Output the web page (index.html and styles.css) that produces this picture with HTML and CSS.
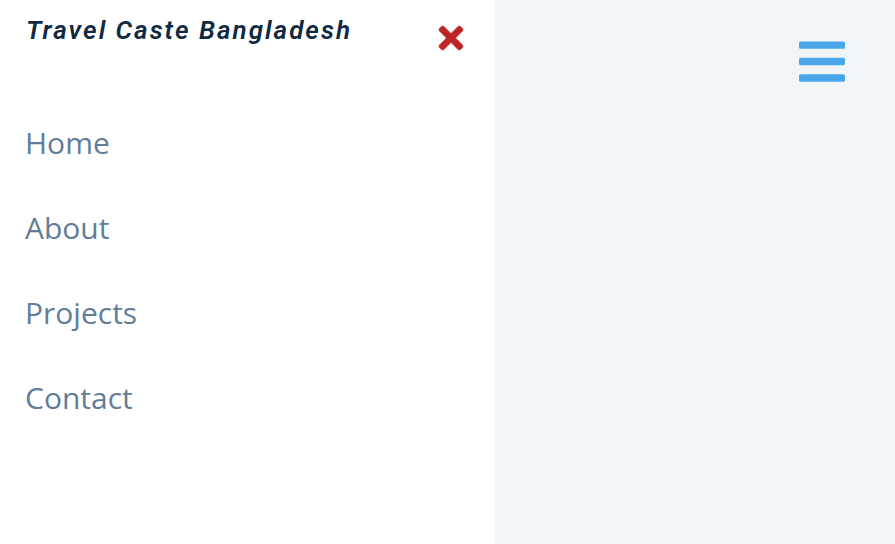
FILE: index.html
```html
<!DOCTYPE html>
<html lang="en">
<head>
<meta charset="utf-8">
<title>Travel Caste Bangladesh</title>
<link rel="stylesheet" href="styles.css">
</head>
<body>
<aside class="sidebar">
  <header class="sidebar-header">
    <h1 class="brand">Travel Caste Bangladesh</h1>
    <button class="icon-btn close-btn" type="button" aria-label="Close menu">
      <svg class="close-icon" viewBox="0 0 352 512" aria-hidden="true"><path fill="currentColor" stroke="currentColor" stroke-width="8" d="M242.72 256l100.07-100.07c12.28-12.28 12.28-32.19 0-44.48l-22.24-22.24c-12.28-12.28-32.19-12.28-44.48 0L176 189.28 75.93 89.21c-12.28-12.28-32.19-12.28-44.48 0L9.21 111.45c-12.28 12.28-12.28 32.19 0 44.48L109.28 256 9.21 356.07c-12.28 12.28-12.28 32.19 0 44.48l22.24 22.24c12.28 12.28 32.2 12.28 44.48 0L176 322.72l100.07 100.07c12.28 12.28 32.2 12.28 44.48 0l22.24-22.24c12.28-12.28 12.28-32.19 0-44.48L242.72 256z"/></svg>
    </button>
  </header>
  <nav>
    <ul class="links">
      <li><a href="#home">Home</a></li>
      <li><a href="#about">About</a></li>
      <li><a href="#projects">Projects</a></li>
      <li><a href="#contact">Contact</a></li>
    </ul>
  </nav>
</aside>
<main class="page">
  <button class="icon-btn menu-btn" type="button" aria-label="Open menu">
    <svg class="menu-icon" viewBox="0 0 448 512" aria-hidden="true"><path fill="currentColor" d="M16 132h416c8.837 0 16-7.163 16-16V76c0-8.837-7.163-16-16-16H16C7.163 60 0 67.163 0 76v40c0 8.837 7.163 16 16 16zm0 160h416c8.837 0 16-7.163 16-16v-40c0-8.837-7.163-16-16-16H16c-8.837 0-16 7.163-16 16v40c0 8.837 7.163 16 16 16zm0 160h416c8.837 0 16-7.163 16-16v-40c0-8.837-7.163-16-16-16H16c-8.837 0-16 7.163-16 16v40c0 8.837 7.163 16 16 16z"/></svg>
  </button>
</main>
</body>
</html>
```

FILE: styles.css
```css
* {
  margin: 0;
  padding: 0;
  box-sizing: border-box;
}

body {
  display: flex;
  min-height: 100vh;
  background: #f1f5f8;
  font-family: "Open Sans", sans-serif;
}

.sidebar {
  flex: 1;
  background: #fff;
}

.sidebar-header {
  display: flex;
  justify-content: space-between;
  align-items: flex-start;
  padding: 15px 32px 0 26px;
}

.brand {
  color: #102a42;
  font: italic 600 26px/30px Roboto, sans-serif;
  letter-spacing: 2px;
}

.icon-btn {
  border: 0;
  background: transparent;
  cursor: pointer;
}

.icon-btn svg {
  display: block;
  overflow: visible;
}

.close-btn {
  padding-top: 5px;
  color: #bb2525;
}

.close-icon {
  width: 24px;
  height: 36px;
}

.links {
  padding-top: 44px;
  list-style: none;
}

.links a {
  display: block;
  padding: 21px 25px;
  color: #617d98;
  font-size: 30px;
  line-height: 43px;
  text-decoration: none;
}

.page {
  flex: 0 0 400px;
  display: flex;
  justify-content: flex-end;
  align-items: flex-start;
  padding: 35px 50px;
}

.menu-btn {
  color: #49a6e9;
}

.menu-icon {
  width: 46px;
  height: 53px;
}
```
